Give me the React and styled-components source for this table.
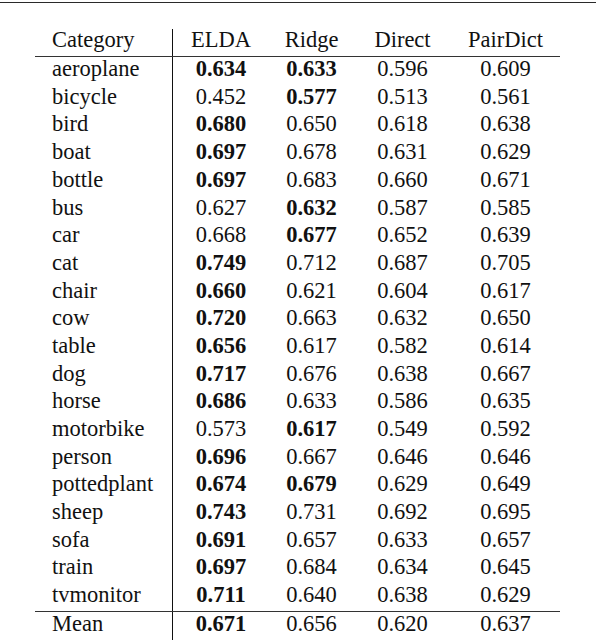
import React from 'react';
import styled, { createGlobalStyle } from 'styled-components';

const rows = [
  ['aeroplane', '0.634', '0.633', '0.596', '0.609', [1, 2]],
  ['bicycle', '0.452', '0.577', '0.513', '0.561', [2]],
  ['bird', '0.680', '0.650', '0.618', '0.638', [1]],
  ['boat', '0.697', '0.678', '0.631', '0.629', [1]],
  ['bottle', '0.697', '0.683', '0.660', '0.671', [1]],
  ['bus', '0.627', '0.632', '0.587', '0.585', [2]],
  ['car', '0.668', '0.677', '0.652', '0.639', [2]],
  ['cat', '0.749', '0.712', '0.687', '0.705', [1]],
  ['chair', '0.660', '0.621', '0.604', '0.617', [1]],
  ['cow', '0.720', '0.663', '0.632', '0.650', [1]],
  ['table', '0.656', '0.617', '0.582', '0.614', [1]],
  ['dog', '0.717', '0.676', '0.638', '0.667', [1]],
  ['horse', '0.686', '0.633', '0.586', '0.635', [1]],
  ['motorbike', '0.573', '0.617', '0.549', '0.592', [2]],
  ['person', '0.696', '0.667', '0.646', '0.646', [1]],
  ['pottedplant', '0.674', '0.679', '0.629', '0.649', [1, 2]],
  ['sheep', '0.743', '0.731', '0.692', '0.695', [1]],
  ['sofa', '0.691', '0.657', '0.633', '0.657', [1]],
  ['train', '0.697', '0.684', '0.634', '0.645', [1]],
  ['tvmonitor', '0.711', '0.640', '0.638', '0.629', [1]]
];

const mean = ['Mean', '0.671', '0.656', '0.620', '0.637', [1]];

const headers = ['Category', 'ELDA', 'Ridge', 'Direct', 'PairDict'];

const GlobalStyle = createGlobalStyle`
  body {
    margin: 0;
    background: #fff;
  }
`;

const Page = styled.div`
  width: 596px;
  height: 640px;
  overflow: hidden;
  background: #fff;
  font-family: 'Liberation Serif', serif;
  font-size: 22.5px;
  color: #111;
`;

const FrameRule = styled.div`
  margin-top: 2px;
  height: 1px;
  background: #2a2a2a;
`;

const Grid = styled.div`
  margin: 25.6px 0 0 35px;
  width: 525px;
`;

const Row = styled.div`
  display: grid;
  grid-template-columns: 138px 96px 85px 97px 109px;
  border-top: ${p => (p.$topRule ? '1px solid #333' : '0')};
  border-bottom: ${p => (p.$bottomRule ? '1px solid #333' : '0')};
`;

const Cell = styled.div`
  font-family: 'Liberation Serif', serif;
  font-weight: ${p => (p.$bold ? 'bold' : 'normal')};
  line-height: 20px;
  height: 27.7px;
  box-sizing: border-box;
  padding: 1.8px 0 5.9px;
  text-align: center;
  white-space: nowrap;
`;

const NameCell = styled(Cell)`
  text-align: left;
  padding-left: 17px;
  border-right: 1px solid #111;
`;

const DataRow = ({ data, topRule }) => {
  const [name, ...rest] = data;
  const bold = rest[4];
  return (
    <Row $topRule={topRule}>
      <NameCell>{name}</NameCell>
      {rest.slice(0, 4).map((v, i) => (
        <Cell key={i} $bold={bold.includes(i + 1)}>
          {v}
        </Cell>
      ))}
    </Row>
  );
};

const App = () => (
  <Page>
    <GlobalStyle />
    <FrameRule />
    <Grid>
      <Row $bottomRule>
        <NameCell>{headers[0]}</NameCell>
        {headers.slice(1).map(h => (
          <Cell key={h}>{h}</Cell>
        ))}
      </Row>
      {rows.map(r => (
        <DataRow key={r[0]} data={r} />
      ))}
      <DataRow data={mean} topRule />
    </Grid>
  </Page>
);

export default App;
